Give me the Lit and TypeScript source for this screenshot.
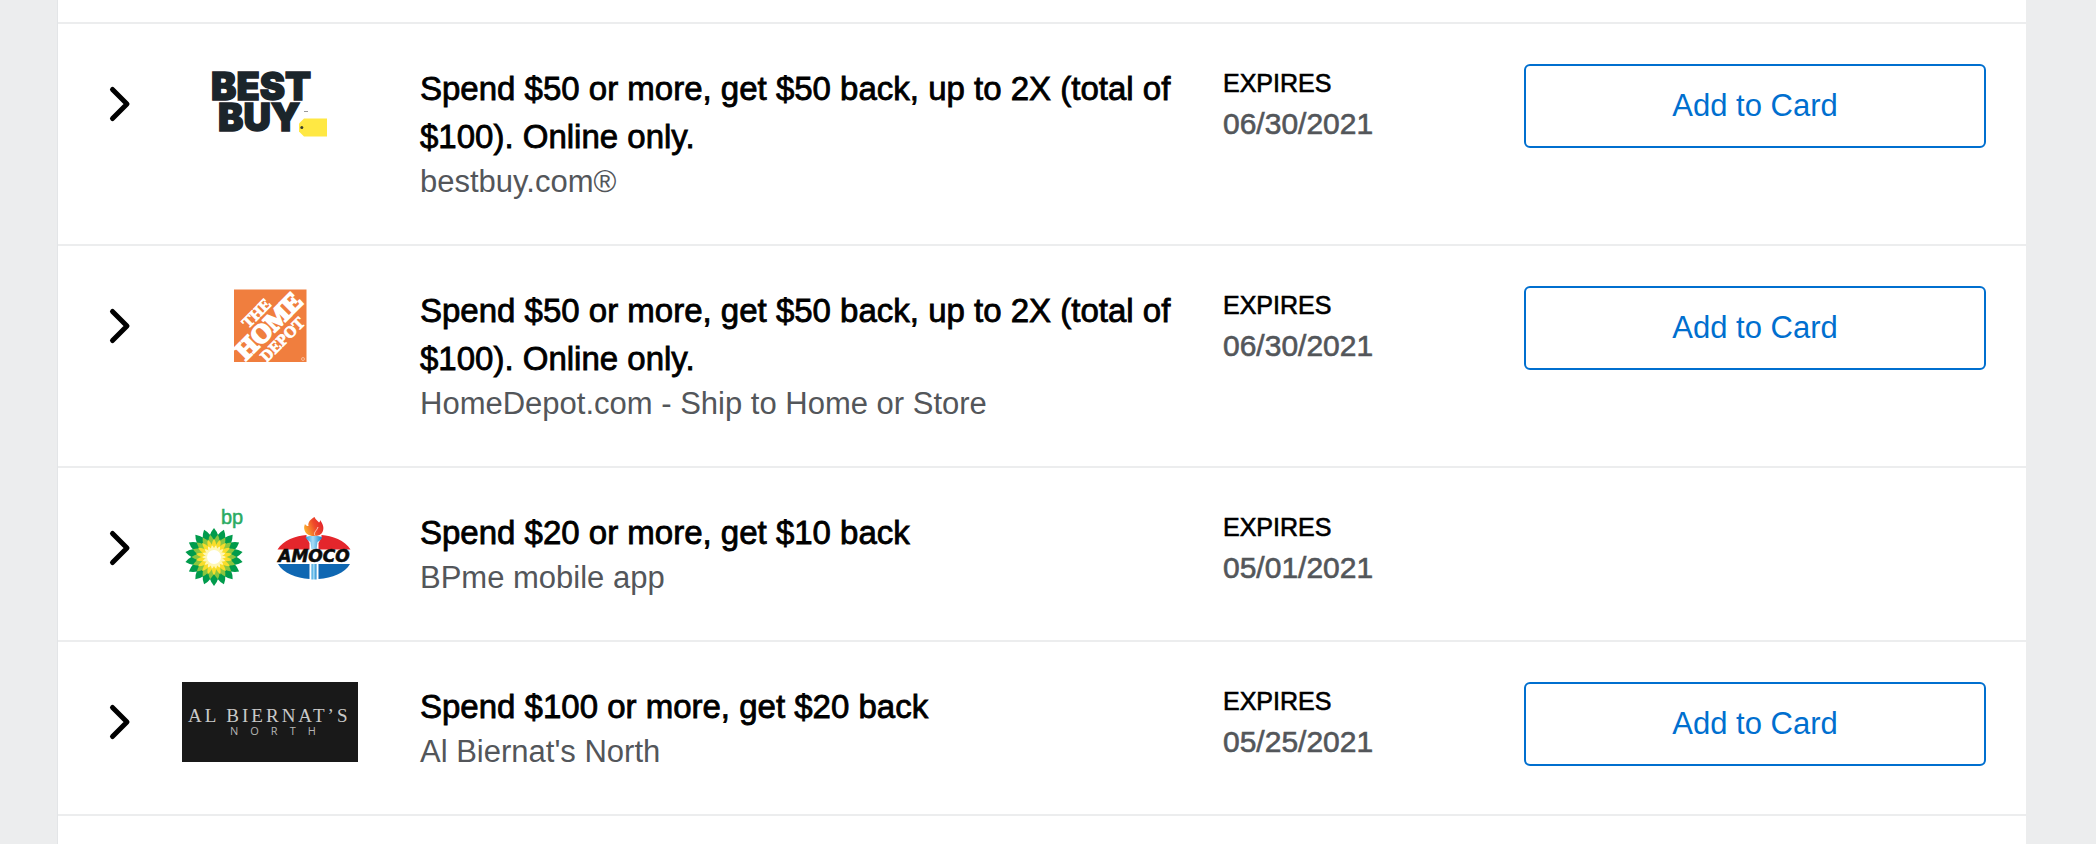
import { LitElement, html, css, svg, nothing, type TemplateResult } from "lit";
import { customElement, property } from "lit/decorators.js";

interface Offer {
  id: string;
  title: string;
  merchant: string;
  expires: string;
  addable: boolean;
  logo: TemplateResult;
}

const bestBuyLogo = html`
  <svg class="logo" viewBox="0 0 176 80" role="img" aria-label="Best Buy">
    <g fill="#1b252b" stroke="#1b252b" stroke-width="1.4" font-family="Inter, sans-serif" font-weight="900" font-size="38">
      <text x="29" y="35.500">BEST</text>
      <text x="36" y="67">BUY</text>
    </g>
    <path d="M122 54.500H145V72.500H122L117 67.500V59.500Z" fill="#ffe843" />
    <circle cx="119.800" cy="63.500" r="1.500" fill="#3c3f2c" />
    <path d="M122 47.500h4" stroke="#9a9a9a" stroke-width="1" />
  </svg>
`;

const homeDepotLogo = html`
  <svg class="logo" viewBox="0 0 176 80" role="img" aria-label="The Home Depot">
    <rect x="52" y="3.500" width="72.500" height="72.500" fill="#f07e3e" />
    <g
      transform="translate(88 39.500) rotate(-45)"
      fill="#fff"
      stroke="#fff"
      text-anchor="middle"
      font-family="'Liberation Serif', serif"
      font-weight="700"
    >
      <text x="-1" y="-13" font-size="16" stroke-width="0.800">THE</text>
      <text x="-1" y="8" font-size="26" stroke-width="2">HOME</text>
      <text x="-1" y="24" font-size="16" stroke-width="0.800">DEPOT</text>
    </g>
    <circle cx="121" cy="73" r="1.500" fill="none" stroke="#fbd3ba" stroke-width="0.700" />
  </svg>
`;

const ring = (tip: number, mid: number, base: number, half: number, fill: string, turn: number) => {
  const shoulder = `${-(tip + mid) / 2 - 0.5}`;
  return Array.from(
    { length: 18 },
    (_, i) => svg`<path
      transform=${`rotate(${i * 20 + turn})`}
      d=${`M0 ${-tip}Q${half * 0.7} ${shoulder} ${half} ${-mid}L${half * 0.6} ${-base}H${-half * 0.6}L${-half} ${-mid}Q${-half * 0.7} ${shoulder} 0 ${-tip}Z`}
      fill=${fill}
    />`,
  );
};

const bpAmocoLogo = html`
  <svg class="logo" viewBox="0 0 176 80" role="img" aria-label="bp and Amoco">
    <text x="39" y="16" fill="#2bab62" stroke="#2bab62" stroke-width="0.500" font-family="'Liberation Sans', sans-serif" font-size="20">bp</text>
    <g transform="translate(32 49)">
      <circle r="21" fill="#0a9c4b" />
      ${ring(29, 21, 14, 4.4, "#009b4c", 0)}
      <circle r="16" fill="#8bc53f" />
      ${ring(22.5, 16, 11, 3, "#8bc53f", 10)}
      <circle r="12" fill="#fbdc2c" />
      ${ring(18.5, 12, 8, 2.3, "#f9dd2a", 0)}
      <circle r="8.500" fill="#fff6a8" />
      ${ring(12, 8.5, 6, 1.6, "#fff7b5", 10)}
      <circle r="7" fill="#fff" />
    </g>
    <defs>
      <linearGradient id="flame" x1="0" y1="0.700" x2="1" y2="0.300">
        <stop offset="0" stop-color="#fdb52c" />
        <stop offset="0.550" stop-color="#ee4a2a" />
        <stop offset="1" stop-color="#e2202c" />
      </linearGradient>
      <linearGradient id="torch" x1="0" x2="1">
        <stop offset="0" stop-color="#2f9bdb" />
        <stop offset="0.450" stop-color="#a6dcf6" />
        <stop offset="1" stop-color="#1583cb" />
      </linearGradient>
    </defs>
    <path d="M95.500 41.500C101 32.500 114 27.500 124.500 27V29.500L127.500 35V41.500Z" fill="#e4262c" />
    <path d="M168.500 41.500C163 32.500 150 27.500 139.500 27V29.500L136.500 35V41.500Z" fill="#e4262c" />
    <path d="M96 56H127.500V71C114 70 101 65 96 56Z" fill="#0f67b2" />
    <path d="M168 56H136.500V71C150 70 163 65 168 56Z" fill="#0f67b2" />
    <path d="M123.500 29Q132 26.500 140 29Q139.500 32 135.500 34L134.500 41.500H129.500L128.500 34Q124.500 32 123.500 29Z" fill="url(#torch)" />
    <path d="M129.500 56H134.500V71.500H129.500Z" fill="url(#torch)" />
    <path
      d="M132.500 9C133.500 11.500 135.500 12.500 137 14.500C138 13.800 138.200 13 138 12C141 16 142.500 20 140.500 24C139.300 26.500 136.500 28 132 28C126.500 28 123.500 25.500 122.500 22C121.800 19.500 122.200 18 123 16C124 17.500 125 18.200 126.500 18C125.500 14 129 11 132.500 9Z"
      fill="url(#flame)"
    />
    <path d="M133 27.500C131 24.500 135 22.500 136 19" fill="none" stroke="#fbd9cf" stroke-width="0.900" />
    <text x="132" y="54" text-anchor="middle" font-family="'DejaVu Sans', sans-serif" font-weight="700" font-style="italic" font-size="17" fill="#0b0b0b" stroke="#0b0b0b" stroke-width="0.600">AMOCO</text>
  </svg>
`;

const alBiernatsLogo = html`
  <svg class="logo" viewBox="0 0 176 80" role="img" aria-label="Al Biernat's North">
    <rect width="176" height="80" fill="#191919" />
    <text class="tracked" x="6" y="40" font-family="'Liberation Serif', serif" font-size="19" fill="#c9c9c9">AL BIERNAT’S</text>
    <text class="tracked-wide" x="48" y="53" font-family="'Open Sans', sans-serif" font-size="11" fill="#b4b4b4">NORTH</text>
  </svg>
`;

const offers: Offer[] = [
  {
    id: "best-buy",
    title: "Spend $50 or more, get $50 back, up to 2X (total of $100). Online only.",
    merchant: "bestbuy.com®",
    expires: "06/30/2021",
    addable: true,
    logo: bestBuyLogo,
  },
  {
    id: "home-depot",
    title: "Spend $50 or more, get $50 back, up to 2X (total of $100). Online only.",
    merchant: "HomeDepot.com - Ship to Home or Store",
    expires: "06/30/2021",
    addable: true,
    logo: homeDepotLogo,
  },
  {
    id: "bp",
    title: "Spend $20 or more, get $10 back",
    merchant: "BPme mobile app",
    expires: "05/01/2021",
    addable: false,
    logo: bpAmocoLogo,
  },
  {
    id: "al-biernats",
    title: "Spend $100 or more, get $20 back",
    merchant: "Al Biernat's North",
    expires: "05/25/2021",
    addable: true,
    logo: alBiernatsLogo,
  },
];

@customElement("offer-row")
class OfferRow extends LitElement {
  @property({ attribute: false }) offer!: Offer;

  static styles = css`
    :host {
      display: grid;
      grid-template-columns: 124px 238px minmax(0, 803fr) minmax(0, 301fr) minmax(0, 462fr);
      align-items: start;
      padding: 40px 40px 40px 0;
    }
    button {
      margin: 0;
      font: inherit;
      cursor: pointer;
      background: none;
    }
    .expand {
      display: flex;
      align-items: center;
      justify-content: center;
      width: 124px;
      height: 80px;
      padding: 0;
      border: 0;
    }
    .chevron {
      width: 24px;
      height: 40px;
    }
    .logo {
      display: block;
      width: 176px;
      height: 80px;
    }
    .tracked {
      letter-spacing: 3px;
    }
    .tracked-wide {
      letter-spacing: 12px;
    }
    .copy {
      padding: 1px 0;
    }
    .title,
    .merchant,
    .label,
    .date {
      margin: 0;
      font-weight: 400;
    }
    .title {
      font-size: 33px;
      line-height: 48px;
      color: #000;
      -webkit-text-stroke: 0.025em #000;
    }
    .merchant {
      font-size: 31px;
      line-height: 42px;
      color: #53565a;
    }
    .label {
      font-size: 25px;
      line-height: 38px;
      color: #000;
      -webkit-text-stroke: 0.025em #000;
    }
    .date {
      font-size: 30px;
      line-height: 44px;
      color: #53565a;
      -webkit-text-stroke: 0.02em #53565a;
    }
    .add {
      width: 100%;
      height: 84px;
      padding: 0 24px;
      border: 2px solid #006fcf;
      border-radius: 6px;
      background: #fff;
      color: #006fcf;
      font-size: 31px;
      line-height: 44px;
    }
  `;

  render() {
    const { title, merchant, expires, addable, logo } = this.offer;
    return html`
      <button class="expand" type="button" aria-label="Show offer details" aria-expanded="false">
        <svg class="chevron" viewBox="0 0 24 40" aria-hidden="true">
          <path d="M4.500 5.500L19 20L4.500 34.500" fill="none" stroke="#000" stroke-width="5" stroke-linecap="round" stroke-linejoin="round" />
        </svg>
      </button>
      ${logo}
      <div class="copy">
        <h2 class="title">${title}</h2>
        <p class="merchant">${merchant}</p>
      </div>
      <div>
        <p class="label">EXPIRES</p>
        <p class="date">${expires}</p>
      </div>
      ${addable ? html`<button class="add" type="button">Add to Card</button>` : nothing}
    `;
  }
}

@customElement("app-root")
class AppRoot extends LitElement {
  static styles = css`
    :host {
      display: block;
      box-sizing: border-box;
      min-height: 100vh;
      padding: 0 70px 0 57px;
      background: #ecedee;
      font-family: "Liberation Sans", Arial, sans-serif;
    }
    .panel {
      box-sizing: border-box;
      min-height: 100vh;
      padding-top: 22px;
      border-left: 1px solid #e3e5e7;
      background: #fff;
    }
    .offers {
      margin: 0;
      padding: 0;
      list-style: none;
      border-bottom: 2px solid #ecedee;
    }
    .item {
      border-top: 2px solid #ecedee;
    }
  `;

  render() {
    return html`
      <main class="panel">
        <ul class="offers">
          ${offers.map((offer) => html`<li class="item"><offer-row .offer=${offer}></offer-row></li>`)}
        </ul>
      </main>
    `;
  }
}
